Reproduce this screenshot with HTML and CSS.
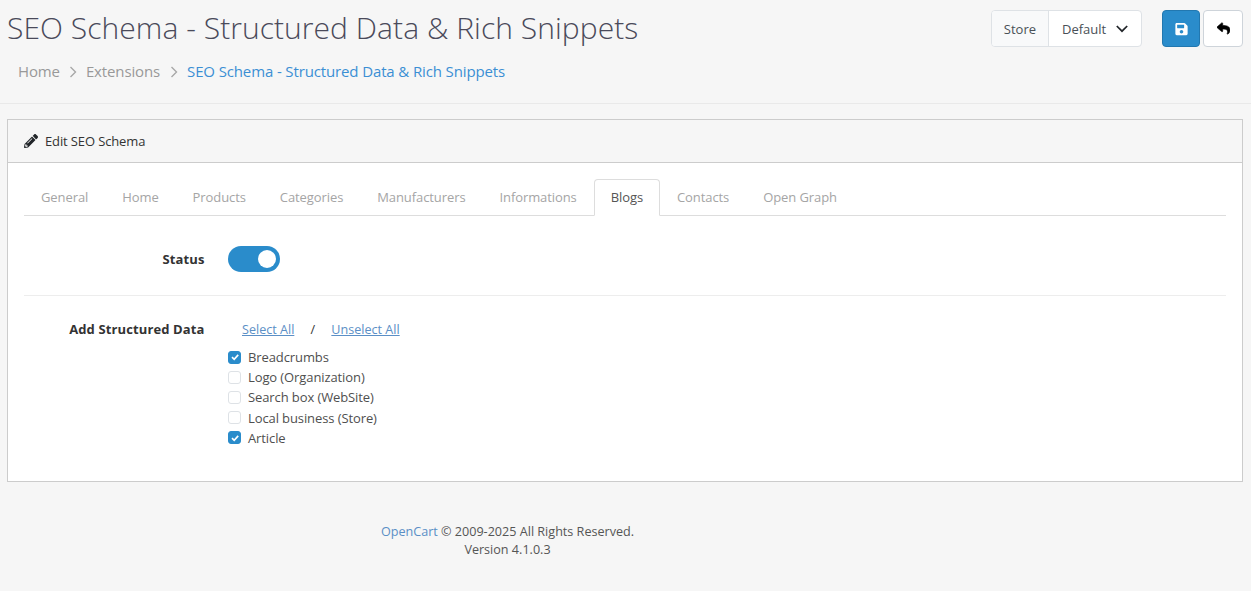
FILE: index.html
```html
<!DOCTYPE html>
<html lang="en">
<head>
<meta charset="utf-8">
<title>SEO Schema</title>
<link rel="stylesheet" href="styles.css">
</head>
<body>
<header class="page-header">
  <div class="head-top">
    <h1>SEO Schema - Structured Data &amp; Rich Snippets</h1>
    <div class="actions">
      <div class="store">
        <span class="store-label">Store</span>
        <span class="store-value">Default
          <svg class="chev" viewBox="0 0 12 8" width="12" height="8"><path d="M.8 1 6 6.200 11.200 1" fill="none" stroke="#212529" stroke-width="1.700"/></svg>
        </span>
      </div>
      <div class="btns">
        <button class="btn btn-primary" type="button" aria-label="Save">
          <svg viewBox="0 0 448 512" width="13" height="14"><path fill="#fff" d="M433.9 129.9l-83.9-83.9A48 48 0 0 0 316.100 32H48C21.500 32 0 53.500 0 80v352c0 26.500 21.500 48 48 48h352c26.500 0 48-21.500 48-48V163.900a48 48 0 0 0-14.100-34zM224 416c-35.300 0-64-28.700-64-64 0-35.300 28.700-64 64-64s64 28.700 64 64c0 35.300-28.700 64-64 64zm96-304.500V212c0 6.600-5.400 12-12 12H76c-6.600 0-12-5.400-12-12V108c0-6.600 5.400-12 12-12h228.500c3.200 0 6.200 1.300 8.500 3.500l3.500 3.500c2.200 2.200 3.500 5.300 3.500 8.500z"/></svg>
        </button>
        <button class="btn btn-light" type="button" aria-label="Back">
          <svg viewBox="0 0 512 512" width="13" height="13"><path fill="#000" stroke="#000" stroke-width="24" d="M8.300 189.800 184.300 37.800C199.700 24.500 224 35.300 224 56v80.100c160.600 1.800 288 34 288 186.300 0 61.400-39.600 122.300-83.300 154.100-13.700 9.900-33.100-2.500-28.100-18.600 45.300-144.800-21.500-183.300-176.600-185.500V360c0 20.700-24.300 31.500-39.700 18.200l-176-152c-11.100-9.600-11.100-26.800 0-36.400z"/></svg>
        </button>
      </div>
    </div>
  </div>
  <ol class="crumbs">
    <li><a href="#">Home</a></li>
    <li class="sep sep-first"><svg viewBox="0 0 8 12" width="8" height="12"><path d="M1.500 1 6.500 6 1.500 11" fill="none" stroke="#a8a8a8" stroke-width="1.400"/></svg></li>
    <li><a href="#">Extensions</a></li>
    <li class="sep"><svg viewBox="0 0 8 12" width="8" height="12"><path d="M1.500 1 6.500 6 1.500 11" fill="none" stroke="#a8a8a8" stroke-width="1.400"/></svg></li>
    <li class="current"><a href="#">SEO Schema - Structured Data &amp; Rich Snippets</a></li>
  </ol>
</header>

<main class="card">
  <div class="card-head">
    <svg viewBox="0 0 512 512" width="14" height="14"><path fill="#212529" d="M497.900 142.100l-46.100 46.100c-4.700 4.700-12.300 4.700-17 0l-111-111c-4.700-4.700-4.700-12.300 0-17l46.100-46.100c18.700-18.700 49.100-18.700 67.900 0l60.100 60.100c18.800 18.700 18.800 49.100 0 67.900zM284.200 99.800 21.600 362.400.4 483.900c-2.900 16.400 11.400 30.600 27.800 27.800l121.500-21.300 262.600-262.600c4.700-4.700 4.700-12.300 0-17l-111-111c-4.800-4.700-12.400-4.700-17.100 0zM124.100 339.900c-5.500-5.500-5.500-14.300 0-19.800l154-154c5.500-5.500 14.300-5.500 19.800 0s5.500 14.300 0 19.800l-154 154c-5.500 5.500-14.300 5.500-19.800 0zM88 424h48v36.300l-64.500 11.300-31.100-31.100L51.700 376H88v48z"/></svg>
    <span>Edit SEO Schema</span>
  </div>
  <div class="card-body">
    <ul class="tabs">
      <li><a href="#">General</a></li>
      <li><a href="#">Home</a></li>
      <li><a href="#">Products</a></li>
      <li><a href="#">Categories</a></li>
      <li><a href="#">Manufacturers</a></li>
      <li><a href="#">Informations</a></li>
      <li class="active"><a href="#">Blogs</a></li>
      <li><a href="#">Contacts</a></li>
      <li><a href="#">Open Graph</a></li>
    </ul>

    <div class="row row-status">
      <div class="label">Status</div>
      <div class="field"><span class="switch"><span class="knob"></span></span></div>
    </div>

    <div class="row row-data">
      <div class="label">Add Structured Data</div>
      <div class="field">
        <div class="links">
          <a href="#">Select All</a>
          <span class="slash">/</span>
          <a href="#">Unselect All</a>
        </div>
        <ul class="checks">
          <li class="on"><span class="box"><svg viewBox="0 0 12 12" width="12" height="12"><path d="M3 6.200 5.200 8.300 9.200 3.900" fill="none" stroke="#fff" stroke-width="1.700"/></svg></span>Breadcrumbs</li>
          <li><span class="box"></span>Logo (Organization)</li>
          <li><span class="box"></span>Search box (WebSite)</li>
          <li><span class="box"></span>Local business (Store)</li>
          <li class="on"><span class="box"><svg viewBox="0 0 12 12" width="12" height="12"><path d="M3 6.200 5.200 8.300 9.200 3.900" fill="none" stroke="#fff" stroke-width="1.700"/></svg></span>Article</li>
        </ul>
      </div>
    </div>
  </div>
</main>

<footer class="foot">
  <p><a href="#">OpenCart</a> © 2009-2025 All Rights Reserved.</p>
  <p>Version 4.1.0.3</p>
</footer>
</body>
</html>
```

FILE: styles.css
```css
* { box-sizing: border-box; }
html, body { margin: 0; padding: 0; }
body {
  width: 1251px;
  height: 591px;
  overflow: hidden;
  background: #f6f6f6;
  color: #4a4a4a;
  font-family: "Open Sans", sans-serif;
  font-size: 13px;
  line-height: 18px;
}
a { text-decoration: none; }
ul, ol { list-style: none; margin: 0; padding: 0; }

.page-header {
  height: 104px;
  border-bottom: 1px solid #e9e9e9;
  padding: 10px 8px 0 7px;
}
.head-top { display: flex; justify-content: space-between; align-items: flex-start; }
h1 {
  margin: 0;
  font-size: 30px;
  font-weight: 300;
  line-height: 36px;
  letter-spacing: .05px;
  color: #4a4a5a;
}
.actions { display: flex; gap: 20px; }
.store {
  display: flex;
  height: 37px;
  border: 1px solid #dee2e6;
  border-radius: 4px;
  background: #fff;
  overflow: hidden;
}
.store-label {
  display: flex;
  align-items: center;
  padding: 0 12px;
  background: #f8f9fa;
  border-right: 1px solid #dee2e6;
  color: #495057;
}
.store-value {
  display: flex;
  align-items: center;
  gap: 10px;
  padding: 0 0 0 13px;
  width: 92px;
  color: #495057;
}
.chev { flex: none; }
.btns { display: flex; gap: 3px; }
.btn {
  display: flex;
  align-items: center;
  justify-content: center;
  width: 38px;
  height: 37px;
  padding: 0;
  border-radius: 4px;
  border: 1px solid #dee2e6;
}
.btn-primary { background: #2a8ccb; border-color: #2278b0; width: 38px; }
.btn-light { background: #fff; border-color: #ced4da; width: 40px; }

.crumbs {
  display: flex;
  align-items: center;
  margin-top: 13px;
  padding-left: 11px;
  font-size: 15px;
  line-height: 22px;
  letter-spacing: -.13px;
}
.crumbs a { color: #999; }
.crumbs .sep { display: flex; width: 27px; justify-content: center; padding-top: 1px; }
.crumbs .sep-first { width: 26px; }
.crumbs .current a { color: #3b8fd4; }

.card {
  width: 1236px;
  height: 363px;
  margin: 15px 0 0 7px;
  border: 1px solid #ccc;
  background: #fff;
}
.card-head {
  display: flex;
  align-items: center;
  gap: 7px;
  height: 43px;
  padding: 0 16px;
  background: #f6f6f6;
  border-bottom: 1px solid #ccc;
  color: #333;
  letter-spacing: -.13px;
}
.card-body { padding: 16px 16px 0; }

.tabs { display: flex; height: 37px; border-bottom: 1px solid #ddd; letter-spacing: -.09px; }
.tabs li { height: 37px; border: 1px solid transparent; border-radius: 4px 4px 0 0; }
.tabs a { display: block; padding: 8px 16px 0; color: #a5a5a5; }
.tabs .active { border-color: #ddd; border-bottom-color: #fff; background: #fff; }
.tabs .active a { color: #555; }

.row { display: flex; }
.label {
  width: 180.5px;
  text-align: right;
  font-weight: 700;
  letter-spacing: .12px;
  color: #333;
}
.field { margin-left: 23.5px; }
.row-status { height: 80px; padding-top: 30px; border-bottom: 1px solid #ededed; }
.row-status .label { padding-top: 4px; }
.switch {
  display: block;
  position: relative;
  width: 52px;
  height: 26px;
  border-radius: 13px;
  background: #2a8ccb;
}
.knob {
  position: absolute;
  top: 4px;
  right: 4px;
  width: 18px;
  height: 18px;
  border-radius: 50%;
  background: #fff;
}
.row-data { padding-top: 24px; }
.links { display: flex; padding: 1px 0 0 14px; height: 27px; font-size: 12.6px; }
.links a { color: #5b8fc6; text-decoration: underline; }
.slash { width: 37px; text-align: center; color: #333; }
.checks { letter-spacing: -.1px; }
.checks li { display: flex; align-items: center; height: 20.2px; color: #4f4f4f; }
.box {
  display: flex;
  width: 13px;
  height: 13px;
  margin-right: 7px;
  border: 1px solid #dee2e6;
  border-radius: 3px;
  background: #fff;
}
.on .box { background: #2a8ccb; border-color: #2a8ccb; align-items: center; justify-content: center; }
.box svg { flex: none; }

.foot { margin: 41px 0 0; width: 1015px; text-align: center; color: #555; font-size: 12.6px; }
.foot p { margin: 0; }
.foot a { color: #5b8fc6; }
```
